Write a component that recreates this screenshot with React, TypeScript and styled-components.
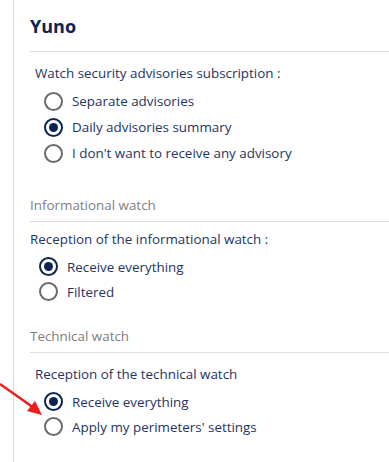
import React, { useState } from 'react';
import styled, { createGlobalStyle } from 'styled-components';

const GlobalStyle = createGlobalStyle`
  body {
    margin: 0;
    background: #fff;
    font-family: "Open Sans", "Liberation Sans", sans-serif;
  }
`;

const Page = styled.div`
  position: relative;
  width: 389px;
  height: 462px;
  overflow: hidden;
`;

const Frame = styled.div`
  margin-left: 13px;
  border-left: 1px solid #dcdcdc;
  height: 462px;
  padding-left: 16px;
`;

const Title = styled.h2`
  margin: 0;
  padding: 14px 0 13px;
  font-size: 18px;
  line-height: 24px;
  font-weight: 700;
  color: #0c2454;
  border-bottom: 1px solid #dcdcdc;
`;

const SectionTitle = styled.div<{ $top: number }>`
  margin-top: ${(p) => p.$top}px;
  padding-bottom: 6px;
  font-size: 13.4px;
  line-height: 20px;
  color: #808080;
  border-bottom: 1px solid #dcdcdc;
`;

const Group = styled.div<{ $indent: number; $top: number }>`
  padding-left: ${(p) => p.$indent}px;
  margin-top: ${(p) => p.$top}px;
`;

const Question = styled.div`
  font-size: 13.4px;
  line-height: 20px;
  color: #24345f;
`;

const Options = styled.div`
  margin-top: 5px;
  padding-left: 9px;
`;

const Row = styled.label<{ $h: number }>`
  display: flex;
  align-items: center;
  gap: 9px;
  height: ${(p) => p.$h}px;
  font-size: 13.4px;
  color: #24345f;
  cursor: pointer;
`;

const Circle = styled.span<{ $on: boolean }>`
  box-sizing: border-box;
  width: 19px;
  height: 19px;
  border-radius: 50%;
  border: ${(p) => (p.$on ? '2.5px solid #0c2454' : '2px solid #6a6a6a')};
  display: flex;
  align-items: center;
  justify-content: center;
  flex-shrink: 0;
  &::after {
    content: '';
    display: ${(p) => (p.$on ? 'block' : 'none')};
    width: 9px;
    height: 9px;
    border-radius: 50%;
    background: #0c2454;
  }
`;

const Arrow = styled.svg`
  position: absolute;
  left: 0;
  top: 382px;
`;

type RadioProps = {
  options: string[];
  value: number;
  onChange: (i: number) => void;
  h: number;
};

const Radios = ({ options, value, onChange, h }: RadioProps) => (
  <Options>
    {options.map((o, i) => (
      <Row key={o} $h={h} onClick={() => onChange(i)}>
        <Circle $on={value === i} />
        {o}
      </Row>
    ))}
  </Options>
);

const App = () => {
  const [advisory, setAdvisory] = useState(1);
  const [info, setInfo] = useState(0);
  const [tech, setTech] = useState(0);

  return (
    <Page>
      <GlobalStyle />
      <Frame>
        <Title>Yuno</Title>
        <Group $indent={5} $top={11}>
          <Question>Watch security advisories subscription :</Question>
          <Radios
            h={26}
            value={advisory}
            onChange={setAdvisory}
            options={['Separate advisories', 'Daily advisories summary', "I don't want to receive any advisory"]}
          />
        </Group>
        <SectionTitle $top={29}>Informational watch</SectionTitle>
        <Group $indent={0} $top={7}>
          <Question>Reception of the informational watch :</Question>
          <Radios h={25} value={info} onChange={setInfo} options={['Receive everything', 'Filtered']} />
        </Group>
        <SectionTitle $top={22}>Technical watch</SectionTitle>
        <Group $indent={5} $top={11}>
          <Question>Reception of the technical watch</Question>
          <Radios
            h={25}
            value={tech}
            onChange={setTech}
            options={['Receive everything', "Apply my perimeters' settings"]}
          />
        </Group>
      </Frame>
      <Arrow width="50" height="45" viewBox="0 0 50 45">
        <line x1="0" y1="2" x2="34" y2="26" stroke="#ee1c1c" strokeWidth="2.5" />
        <polygon points="42,33 27,29 35,19" fill="#ee1c1c" />
      </Arrow>
    </Page>
  );
};

export default App;
